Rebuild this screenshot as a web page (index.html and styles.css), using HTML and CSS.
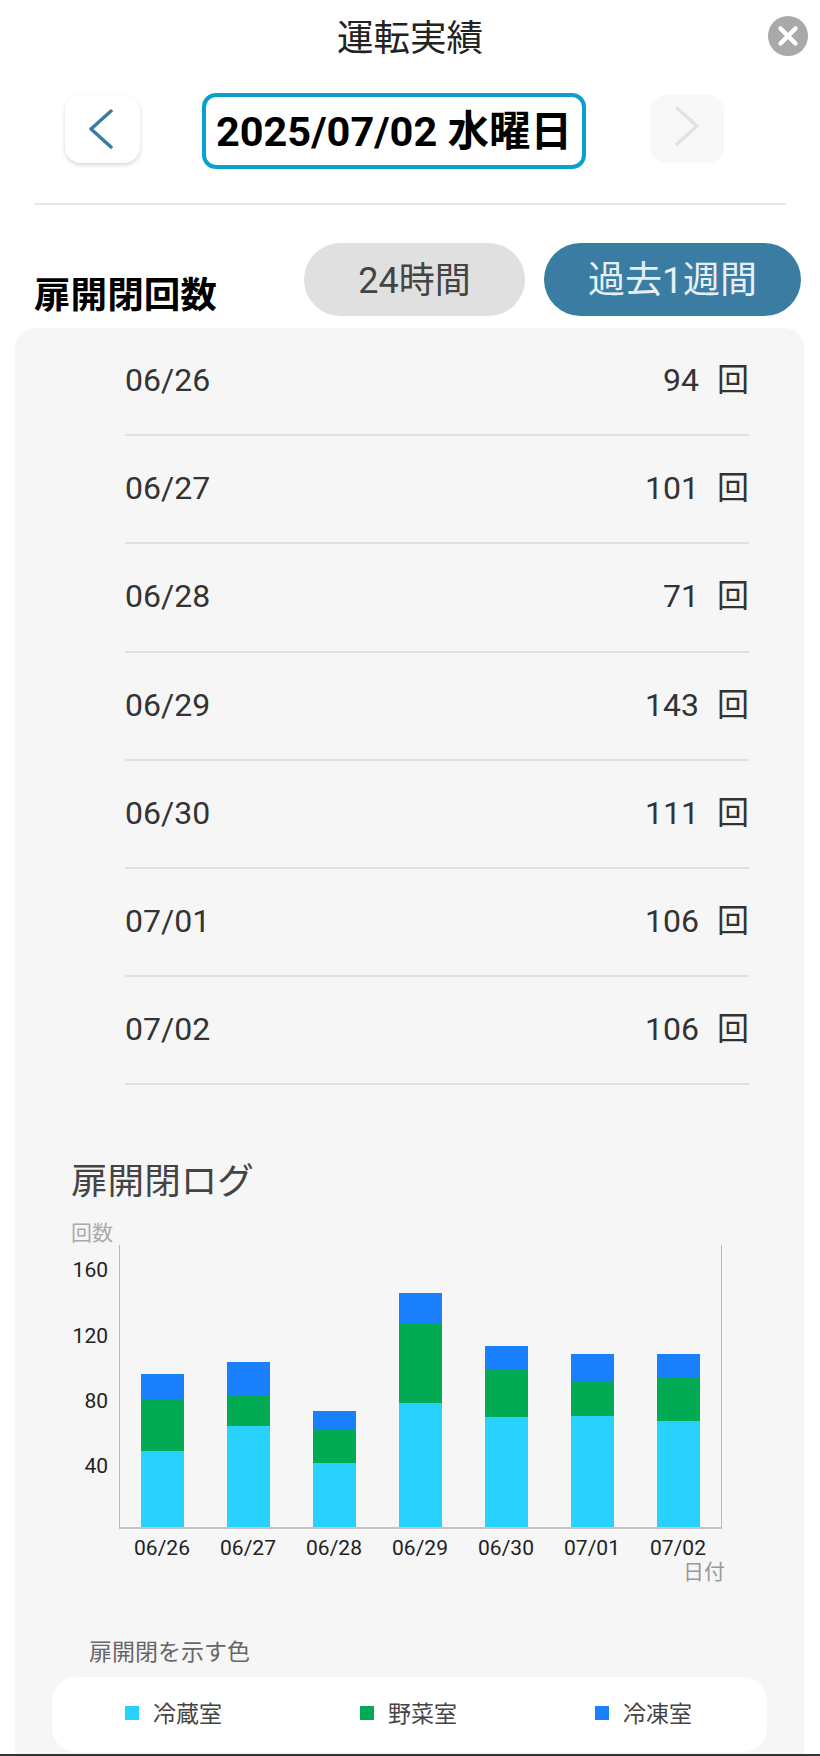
FILE: index.html
```html
<!DOCTYPE html>
<html lang="ja">
<head>
    <meta charset="UTF-8">
    <meta name="viewport" content="width=device-width, initial-scale=1.0">
    <title>運転実績</title>
    <link rel="stylesheet" href="styles.css">
</head>
<body>
    <div class="page">
        <header class="header">
            <h1 class="title">運転実績</h1>
            <button class="close" aria-label="閉じる">
                <svg width="40" height="40" viewBox="0 0 40 40">
                    <circle cx="20" cy="20" r="20" fill="#a9a9a9"/>
                    <path d="M12.5 12.5 L27.5 27.5 M27.5 12.5 L12.5 27.5" stroke="#fff" stroke-width="4.5" stroke-linecap="round"/>
                </svg>
            </button>
        </header>

        <div class="date-nav">
            <button class="nav-btn prev" aria-label="前の日">
                <svg width="26" height="40" viewBox="0 0 26 40">
                    <path d="M23 2 L3 20 L23 38" fill="none" stroke="#3b7ca3" stroke-width="3.5" stroke-linecap="round" stroke-linejoin="round"/>
                </svg>
            </button>
            <div class="date-box">2025/07/02 水曜日</div>
            <button class="nav-btn next" aria-label="次の日">
                <svg width="26" height="40" viewBox="0 0 26 40">
                    <path d="M3 2 L23 20 L3 38" fill="none" stroke="#e2e2e2" stroke-width="3.5" stroke-linecap="round" stroke-linejoin="round"/>
                </svg>
            </button>
        </div>

        <hr class="divider">

        <div class="section-head">
            <h2 class="section-title">扉開閉回数</h2>
            <div class="tabs">
                <button class="tab tab-day">24時間</button>
                <button class="tab tab-week">過去1週間</button>
            </div>
        </div>

        <section class="card">
            <ul class="count-list">
                <li class="count-row"><span>06/26</span><span class="count"><b>94</b><i>回</i></span></li>
                <li class="count-row"><span>06/27</span><span class="count"><b>101</b><i>回</i></span></li>
                <li class="count-row"><span>06/28</span><span class="count"><b>71</b><i>回</i></span></li>
                <li class="count-row"><span>06/29</span><span class="count"><b>143</b><i>回</i></span></li>
                <li class="count-row"><span>06/30</span><span class="count"><b>111</b><i>回</i></span></li>
                <li class="count-row"><span>07/01</span><span class="count"><b>106</b><i>回</i></span></li>
                <li class="count-row"><span>07/02</span><span class="count"><b>106</b><i>回</i></span></li>
            </ul>

            <h3 class="log-title">扉開閉ログ</h3>
            <div class="axis-name">回数</div>
            <div class="chart">
                <div class="y-axis">
                    <span>160</span>
                    <span>120</span>
                    <span>80</span>
                    <span>40</span>
                </div>
                <div class="plot">
                    <div class="bar">
                        <div class="seg freezer" style="height: 26px"></div>
                        <div class="seg vegetable" style="height: 51px"></div>
                        <div class="seg fridge" style="height: 76px"></div>
                    </div>
                    <div class="bar">
                        <div class="seg freezer" style="height: 33px"></div>
                        <div class="seg vegetable" style="height: 31px"></div>
                        <div class="seg fridge" style="height: 101px"></div>
                    </div>
                    <div class="bar">
                        <div class="seg freezer" style="height: 19px"></div>
                        <div class="seg vegetable" style="height: 33px"></div>
                        <div class="seg fridge" style="height: 64px"></div>
                    </div>
                    <div class="bar">
                        <div class="seg freezer" style="height: 31px"></div>
                        <div class="seg vegetable" style="height: 79px"></div>
                        <div class="seg fridge" style="height: 124px"></div>
                    </div>
                    <div class="bar">
                        <div class="seg freezer" style="height: 24px"></div>
                        <div class="seg vegetable" style="height: 47px"></div>
                        <div class="seg fridge" style="height: 110px"></div>
                    </div>
                    <div class="bar">
                        <div class="seg freezer" style="height: 28px"></div>
                        <div class="seg vegetable" style="height: 34px"></div>
                        <div class="seg fridge" style="height: 111px"></div>
                    </div>
                    <div class="bar">
                        <div class="seg freezer" style="height: 23px"></div>
                        <div class="seg vegetable" style="height: 44px"></div>
                        <div class="seg fridge" style="height: 106px"></div>
                    </div>
                </div>
            </div>
            <div class="x-axis">
                <span>06/26</span>
                <span>06/27</span>
                <span>06/28</span>
                <span>06/29</span>
                <span>06/30</span>
                <span>07/01</span>
                <span>07/02</span>
            </div>
            <div class="axis-name axis-date">日付</div>

            <div class="legend-title">扉開閉を示す色</div>
            <div class="legend">
                <div class="legend-item"><span class="swatch fridge"></span>冷蔵室</div>
                <div class="legend-item"><span class="swatch vegetable"></span>野菜室</div>
                <div class="legend-item"><span class="swatch freezer"></span>冷凍室</div>
            </div>
        </section>
    </div>
</body>
</html>
```

FILE: styles.css
```css
* {
    box-sizing: border-box;
}

body {
    margin: 0;
    background-color: #fff;
    font-family: Roboto, "Noto Sans CJK JP", sans-serif;
    color: #333;
}

button {
    font-family: inherit;
    padding: 0;
    border: none;
    background: none;
}

.page {
    width: 820px;
    height: 1756px;
    overflow: hidden;
    border-bottom: 2px solid #333;
}

/* header */
.header {
    display: grid;
    grid-template-columns: 1fr auto 1fr;
    align-items: center;
    height: 72px;
    padding: 0 12px;
}

.title {
    grid-column: 2;
    margin: 0 0 2px;
    font-size: 36.5px;
    font-weight: 400;
    color: #222;
}

.close {
    justify-self: end;
    display: flex;
}

/* date navigation */
.date-nav {
    display: flex;
    align-items: flex-start;
    margin-top: 21px;
    padding-left: 65px;
}

.nav-btn {
    display: flex;
    align-items: center;
    justify-content: center;
    height: 68px;
    margin-top: 2px;
    border-radius: 16px;
}

.prev {
    width: 75px;
    background-color: #fff;
    box-shadow: 0 2px 4px rgba(0, 0, 0, 0.16);
}

.prev svg {
    margin-right: 3px;
}

.next {
    width: 74px;
    margin-left: 64px;
    background-color: #f8f8f8;
}

.next svg {
    margin-top: -6px;
}

.date-box {
    width: 384px;
    height: 76px;
    margin-left: 62px;
    border: 4px solid #0ba0cc;
    border-radius: 14px;
    font-size: 41.5px;
    font-weight: 700;
    line-height: 70px;
    text-align: center;
    white-space: nowrap;
    color: #000;
}

.divider {
    height: 2px;
    margin: 34px 34px 0;
    border: none;
    background-color: #e8e8e8;
}

/* section heading */
.section-head {
    display: flex;
    justify-content: space-between;
    align-items: flex-end;
    margin-top: 38px;
    padding: 0 19px 0 34px;
}

.section-title {
    margin: 0;
    font-size: 36.6px;
    font-weight: 700;
    line-height: 40px;
    color: #000;
}

.tabs {
    display: flex;
    gap: 19px;
}

.tab {
    height: 73px;
    padding-bottom: 6px;
    border-radius: 37px;
    font-size: 36px;
}

.tab-day {
    width: 221px;
    background-color: #e0e0e0;
    color: #444;
}

.tab-week {
    width: 257px;
    background-color: #3b7ca3;
    font-size: 37px;
    color: #e6eff5;
}

/* card */
.card {
    height: 1426px;
    margin: 12px 16px 0 15px;
    border-radius: 20px 20px 0 0;
    background-color: #f6f6f6;
    overflow: hidden;
}

.count-list {
    margin: 0;
    padding: 0 55px 0 110px;
    list-style: none;
}

.count-row {
    display: flex;
    justify-content: space-between;
    align-items: center;
    height: 108.2px;
    padding-bottom: 2px;
    border-bottom: 2px solid #e0e0e0;
    font-size: 32px;
    line-height: 38px;
}

.count {
    display: flex;
    align-items: center;
}

.count b {
    font-weight: 400;
}

.count i {
    margin-left: 18px;
    font-style: normal;
}

/* chart */
.log-title {
    margin: 75px 0 0 56px;
    font-size: 36.6px;
    font-weight: 400;
    line-height: 44px;
    color: #444;
}

.axis-name {
    margin: 17px 0 0 56px;
    font-size: 21px;
    line-height: 24px;
    color: #aaa;
}

.chart {
    display: flex;
    margin-left: 56px;
}

.y-axis {
    display: flex;
    flex-direction: column;
    width: 37px;
    margin-right: 11px;
    padding-top: 13px;
    font-size: 21px;
    line-height: 24px;
    text-align: right;
    color: #222;
}

.y-axis span {
    height: 65.4px;
}

.plot {
    display: flex;
    align-items: flex-end;
    gap: 43px;
    width: 603px;
    height: 284px;
    padding-left: 20.5px;
    border-left: 1px solid #bbb;
    border-right: 1px solid #bbb;
    border-bottom: 2px solid #c4c4c4;
}

.bar {
    width: 43px;
}

.fridge {
    background-color: #29d1ff;
}

.vegetable {
    background-color: #00ab54;
}

.freezer {
    background-color: #1b80fb;
}

.x-axis {
    display: flex;
    margin: 7px 0 0 104px;
    font-size: 21px;
    line-height: 24px;
    color: #222;
}

.x-axis span {
    width: 86px;
    text-align: center;
}

.axis-date {
    margin: 0 79px 0 0;
    text-align: right;
    color: #999;
}

/* legend */
.legend-title {
    margin: 55px 0 10px 74px;
    font-size: 23px;
    line-height: 28px;
    color: #666;
}

.legend {
    display: grid;
    grid-template-columns: repeat(3, 235px);
    align-items: center;
    width: 715px;
    height: 75px;
    margin-left: 37px;
    padding: 0 0 6px 73px;
    border-radius: 24px;
    background-color: #fff;
}

.legend-item {
    display: flex;
    align-items: center;
    gap: 14px;
    font-size: 23px;
    color: #444;
}

.swatch {
    width: 14px;
    height: 14px;
    margin-top: 2px;
}
```
